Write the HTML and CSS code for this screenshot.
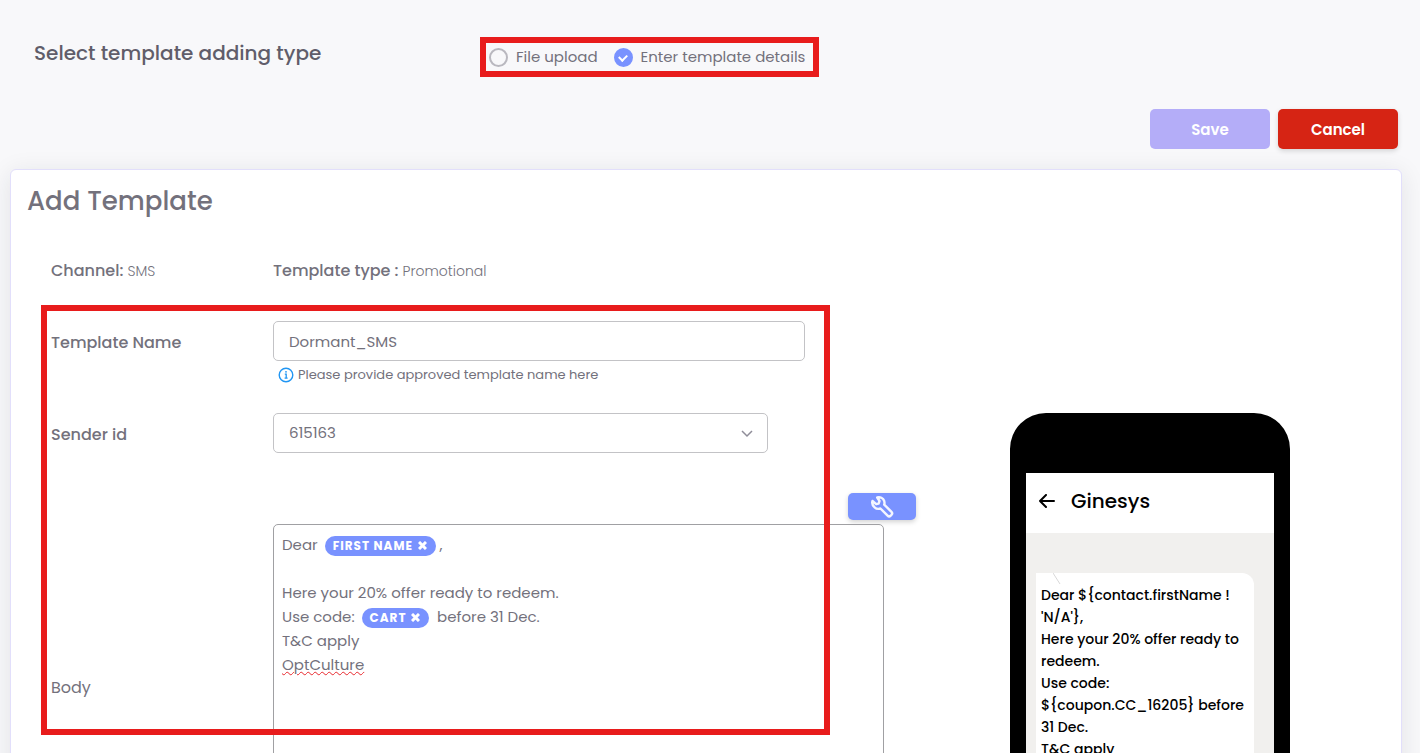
FILE: index.html
```html
<!DOCTYPE html>
<html lang="en">
<head>
  <meta charset="UTF-8">
  <meta name="viewport" content="width=device-width, initial-scale=1">
  <title>Add Template</title>
  <link rel="stylesheet" href="styles.css">
</head>
<body>
  <main class="page">
    <div class="type-row">
      <h2 class="type-title">Select template adding type</h2>
      <div class="type-options" role="radiogroup" aria-label="Template adding type">
        <label class="radio-option"><input type="radio" name="adding-type"><span>File upload</span></label>
        <label class="radio-option"><input type="radio" name="adding-type" checked><span>Enter template details</span></label>
      </div>
    </div>

    <div class="actions">
      <button class="button save-button" type="button" disabled>Save</button>
      <button class="button cancel-button" type="button">Cancel</button>
    </div>

    <section class="card">
      <h1 class="card-title">Add Template</h1>
      <div class="card-body">
        <form class="template-form">
          <div class="form-row">
            <div><span class="label">Channel:</span> <span class="value">SMS</span></div>
            <div><span class="label">Template type :</span> <span class="value">Promotional</span></div>
          </div>

          <div class="fields">
            <div class="form-row name-row">
              <label class="label" for="template-name">Template Name</label>
              <div>
                <input id="template-name" class="control name-input" type="text" value="Dormant_SMS">
                <div class="hint">
                  <svg width="16" height="16" viewBox="0 0 16 16" fill="none" stroke="#2196f3" aria-hidden="true">
                    <circle cx="8" cy="8" r="6.8" stroke-width="1.4"/>
                    <path d="M6.8 7.2H8.2V11M6.6 11.2H9.6" stroke-width="1.3"/>
                    <circle cx="8" cy="4.8" r=".9" fill="#2196f3" stroke="none"/>
                  </svg>
                  <span>Please provide approved template name here</span>
                </div>
              </div>
            </div>

            <div class="form-row sender-row">
              <label class="label" for="sender-id">Sender id</label>
              <div class="select-wrap">
                <select id="sender-id" class="control">
                  <option>615163</option>
                </select>
                <svg class="chevron" width="12" height="8" viewBox="0 0 12 8" fill="none" stroke="#8f8d99" stroke-width="1.5" aria-hidden="true">
                  <path d="M1 1L6 6L11 1"/>
                </svg>
              </div>
            </div>

            <div class="tools">
              <button class="tool-button" type="button" aria-label="Insert placeholder">
                <svg width="24" height="24" viewBox="0 0 24 24" fill="none" stroke="#f4f6ff" stroke-width="2.4" stroke-linecap="round" stroke-linejoin="round" aria-hidden="true">
                  <path d="M7.2 2.5C10 1.6 13.2 3 14.2 6C14.6 7.3 14.6 8.5 14.2 9.7L21.5 16.8C22.4 17.7 22.4 18.8 21.5 19.8L20.7 20.6C19.8 21.5 18.5 21.5 17.6 20.6L10.4 13.5C8.5 14.1 6.2 13.8 4.6 12.3C2.5 10.5 1.8 8 2.5 6L6.2 9.2L8.6 8.6L9.5 6Z"/>
                </svg>
              </button>
            </div>

            <div class="form-row body-row">
              <span class="label" id="body-label">Body</span>
              <div class="editor" contenteditable="true" spellcheck="false" role="textbox" aria-multiline="true" aria-labelledby="body-label">
                <div>Dear <button class="chip" type="button">FIRST NAME <svg width="9" height="9" viewBox="0 0 9 9" aria-hidden="true"><path d="M1 1L8 8M8 1L1 8"/></svg></button> ,</div>
                <div><br></div>
                <div>Here your 20% offer ready to redeem.</div>
                <div>Use code: <button class="chip" type="button">CART <svg width="9" height="9" viewBox="0 0 9 9" aria-hidden="true"><path d="M1 1L8 8M8 1L1 8"/></svg></button> &nbsp;before 31 Dec.</div>
                <div>T&amp;C apply</div>
                <div><span class="misspelled">OptCulture</span></div>
              </div>
            </div>
            <div class="highlight"></div>
          </div>
        </form>

        <!-- SMS preview -->
        <aside class="phone" aria-label="Message preview">
          <div class="phone-header">
            <svg width="16" height="14" viewBox="0 0 16 14" fill="none" stroke="#000" stroke-width="2" stroke-linecap="round" stroke-linejoin="round" aria-hidden="true">
              <path d="M15 7H1M7 1L1 7L7 13"/>
            </svg>
            <span>Ginesys</span>
          </div>
          <div class="phone-chat">
            <div class="bubble">
              <svg class="bubble-tail" width="8" height="12" viewBox="0 0 8 12" fill="none" stroke="#d8d8d8" aria-hidden="true"><path d="M0 0L7 11"/></svg>
              Dear ${contact.firstName !<br>
              'N/A'},<br>
              Here your 20% offer ready to<br>
              redeem.<br>
              Use code:<br>
              ${coupon.CC_16205} before<br>
              31 Dec.<br>
              T&amp;C apply
            </div>
          </div>
        </aside>
      </div>
    </section>
  </main>
</body>
</html>
```
FILE: styles.css
```css
* {
  box-sizing: border-box;
}

body {
  margin: 0;
  font-family: Poppins, Inter, sans-serif;
  font-size: 15px;
  line-height: 24px;
  color: #73717c;
  background: #f8f8fa;
}

button,
input,
select {
  font: inherit;
  color: inherit;
}

.page {
  height: 100vh;
  overflow: hidden auto;
  scrollbar-width: none;
  padding: 37px 18px 24px 10px;
}

.type-row {
  display: grid;
  grid-template-columns: 446px auto;
  justify-content: start;
  padding-left: 24px;
}

.type-title {
  margin: 0;
  font-size: 20px;
  font-weight: 500;
  line-height: 32px;
  color: #605d6a;
}

.type-options {
  display: flex;
  align-items: center;
  gap: 16px;
  height: 40px;
  padding: 0 8px 0 3px;
  border: 6px solid #e81c1c;
}

.radio-option {
  display: flex;
  align-items: center;
  gap: 8px;
  white-space: nowrap;
}

.radio-option input {
  appearance: none;
  display: grid;
  place-items: center;
  width: 19px;
  height: 19px;
  margin: 0;
  border: 2px solid #b9b8bf;
  border-radius: 50%;
}

.radio-option input:checked {
  border-color: #7992ff;
  background: #7992ff;
}

.radio-option input:checked::after {
  content: "";
  width: 6px;
  height: 4px;
  margin-bottom: 1px;
  border: solid #fff;
  border-width: 0 0 2px 2px;
  transform: rotate(-45deg);
}

.actions {
  display: flex;
  justify-content: flex-end;
  gap: 8px;
  margin: 32px 4px 20px 0;
}

.button {
  width: 120px;
  height: 40px;
  padding: 2px 0 0;
  border: 0;
  border-radius: 5px;
  font-weight: 600;
  color: #fff;
}

.save-button {
  background: #b4adf8;
}

.cancel-button {
  background: #d62414;
  box-shadow: 0 2px 5px rgba(0, 0, 0, 0.15);
}

.card {
  padding: 15px 16px 48px;
  border: 1px solid #e2dffb;
  border-radius: 6px;
  background: #fff;
  box-shadow: 0 4px 24px rgba(34, 41, 47, 0.1);
}

.card-title {
  margin: 0 0 42px;
  font-size: 26px;
  font-weight: 500;
  line-height: 32px;
}

.card-body {
  display: flex;
  align-items: flex-start;
  gap: 126px;
  padding-left: 24px;
}

.template-form {
  flex: 0 1 833px;
}

.form-row {
  display: grid;
  grid-template-columns: 222px minmax(0, 1fr);
}

.label {
  font-size: 16px;
  font-weight: 500;
}

.value {
  font-size: 14px;
  font-weight: 300;
}

.fields {
  position: relative;
  margin-top: 38px;
}

.name-row .label,
.sender-row .label {
  padding-top: 10px;
}

.control {
  display: block;
  width: 100%;
  height: 40px;
  padding: 0 15px;
  border: 1px solid #c3c3c6;
  border-radius: 5px;
  background: #fff;
}

.name-input {
  max-width: 532px;
}

.hint {
  display: flex;
  align-items: center;
  gap: 4px;
  margin: 4px 0 28px 5px;
  font-size: 13px;
  line-height: 20px;
}

.select-wrap {
  position: relative;
  max-width: 495px;
}

.select-wrap select {
  appearance: none;
}

.chevron {
  position: absolute;
  top: 17px;
  right: 15px;
  pointer-events: none;
}

.tools {
  display: flex;
  justify-content: flex-end;
  margin: 40px -32px 4px 0;
}

.tool-button {
  display: grid;
  place-items: center;
  width: 68px;
  height: 27px;
  padding: 0;
  border: 0;
  border-radius: 5px;
  background: #7992ff;
  box-shadow: 0 2px 5px rgba(0, 0, 0, 0.18);
}

.body-row {
  align-items: center;
}

.body-row .label {
  font-weight: 400;
}

.editor {
  height: 328px;
  padding: 8px;
  border: 1px solid #a0a0a3;
  border-radius: 5px;
  outline: none;
}

.chip {
  height: 20px;
  margin: 0 0 0 3px;
  padding: 0 9px 0 8px;
  border: 0;
  border-radius: 10px;
  font-size: 12px;
  font-weight: 700;
  letter-spacing: 1px;
  line-height: 20px;
  vertical-align: middle;
  color: #fff;
  background: #7992ff;
}

.chip svg {
  margin-left: 1px;
  fill: none;
  stroke: #fff;
  stroke-width: 3;
}

.misspelled {
  text-decoration: underline wavy #e8282d 1px;
}

/* callout frame around the fields to fill in */
.highlight {
  position: absolute;
  top: -16px;
  left: -10px;
  width: 789px;
  height: 430px;
  border: 6px solid #e81c1c;
  pointer-events: none;
}

.phone {
  flex: 0 0 280px;
  margin-top: 154px;
  border: solid #000;
  border-width: 60px 16px;
  border-radius: 36px;
  color: #000;
}

.phone-header {
  display: flex;
  align-items: center;
  gap: 16px;
  height: 60px;
  padding: 0 13px 4px;
  font-size: 20px;
  font-weight: 500;
  background: #fff;
}

.phone-chat {
  min-height: 360px;
  padding: 40px 20px 20px 10px;
  background: #f1f0ee;
}

.bubble {
  position: relative;
  padding: 11px 5px;
  border-radius: 0 12px 12px;
  font-size: 14px;
  font-weight: 500;
  line-height: 22px;
  white-space: nowrap;
  background: #fff;
}

.bubble-tail {
  position: absolute;
  top: 0;
  left: 17px;
}
```
